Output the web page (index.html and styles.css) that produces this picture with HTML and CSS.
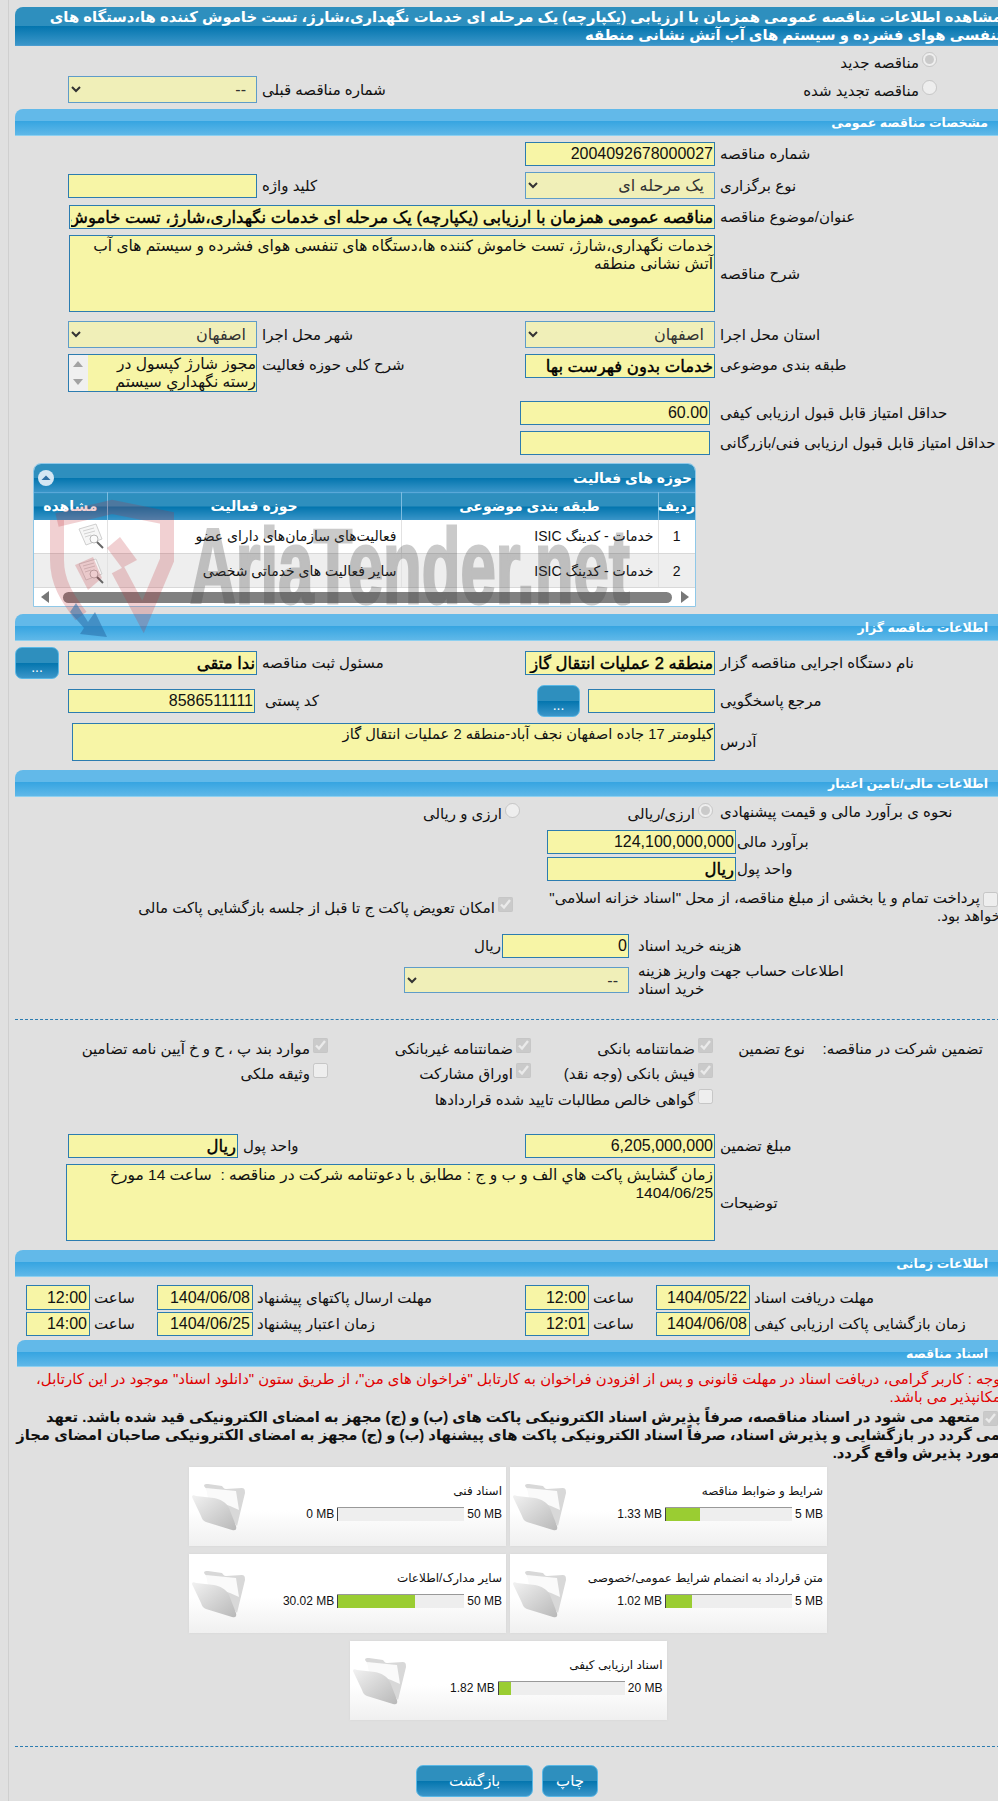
FILE: index.html
```html
<!DOCTYPE html>
<html lang="fa">
<head>
<meta charset="utf-8">
<title>مشاهده اطلاعات مناقصه</title>
<link rel="stylesheet" href="styles.css">
</head>
<body>
<main class="page">
<div class="content" dir="rtl">

<h1 class="title-bar">مشاهده اطلاعات مناقصه عمومی همزمان با ارزیابی (یکپارچه) یک مرحله ای خدمات نگهداری،شارژ، تست خاموش کننده ها،دستگاه های تنفسی هوای فشرده و سیستم های آب آتش نشانی منطقه</h1>

<div class="radio-line mt6 first-radio"><input type="radio" name="n" checked disabled class="radio"><span>مناقصه جدید</span></div>
<div class="row mt9 h27">
  <div class="radio-line renew"><input type="radio" name="n" disabled class="radio"><span>مناقصه تجدید شده</span></div>
  <div class="half span3"><label>شماره مناقصه قبلی</label><select disabled class="f189 h27"><option>--</option></select></div>
</div>

<h2 class="bar mt6">مشخصات مناقصه عمومی</h2>
<div class="row mt6 h24"><label>شماره مناقصه</label><input class="num" value="2004092678000027" readonly></div>
<div class="row mt6 h27"><label>نوع برگزاری</label><select disabled class="h27"><option>یک مرحله ای</option></select>
  <div class="half"><label>کلید واژه</label><input class="f189 h25" readonly></div></div>
<div class="row mt6 h24"><label>عنوان/موضوع مناقصه</label><input class="wide bold" readonly value="مناقصه عمومی همزمان با ارزیابی (یکپارچه) یک مرحله ای خدمات نگهداری،شارژ، تست خاموش کننده ها،دستگاه های تنفسی هوای فشرده و سیستم های آب آتش نشانی منطقه"></div>
<div class="row mt6 h77"><label>شرح مناقصه</label><textarea class="wide h77" readonly>خدمات نگهداری،شارژ، تست خاموش کننده ها،دستگاه های تنفسی هوای فشرده و سیستم های آب آتش نشانی منطقه</textarea></div>
<div class="row mt9 h27"><label>استان محل اجرا</label><select disabled class="h27"><option>اصفهان</option></select>
  <div class="half"><label>شهر محل اجرا</label><select disabled class="f189 h27"><option>اصفهان</option></select></div></div>
<div class="row mt6 h38 top"><label>طبقه بندی موضوعی</label><input class="bold h24" readonly value="خدمات بدون فهرست بها">
  <div class="half"><label>شرح کلی حوزه فعالیت</label><div class="scrollbox f189"><div class="scroll-rail"><i class="up"></i><i class="down"></i></div><p>مجوز شارژ کپسول در رسته نگهداري سيستم</p></div></div></div>
<div class="row-score mt9"><label>حداقل امتیاز قابل قبول ارزیابی کیفی</label><input class="num" value="60.00" readonly></div>
<div class="row-score mt6"><label>حداقل امتیاز قابل قبول ارزیابی فنی/بازرگانی</label><input readonly></div>

<section class="panel">
  <header class="panel-head"><span>حوزه های فعالیت</span><b class="collapse"><svg viewBox="0 0 16 16"><circle cx="8" cy="8" r="8" fill="#d4e6f3"/><path d="M3.5 10 8 5.5l4.500 4.500z" fill="#2f6fa3"/></svg></b></header>
  <table class="grid">
    <thead><tr><th class="c1">ردیف</th><th class="c2">طبقه بندی موضوعی</th><th class="c3">حوزه فعالیت</th><th class="c4">مشاهده</th></tr></thead>
    <tbody>
      <tr><td class="c1 ltr-num">1</td><td>خدمات - کدینگ ISIC</td><td>فعالیت‌های سازمان‌های دارای عضو</td><td class="c4"><svg class="doc" viewBox="0 0 30 28"><path d="M2 6 19 1l6 15-16 6z" fill="#f6f6f6" stroke="#cfcfcf"/><path d="M6 8l11-3M7 11l11-3M8 14l6-2" stroke="#d2d2d2"/><circle cx="17" cy="16" r="4" fill="#fbfbfb" stroke="#b8b8b8"/><path d="M20 19l6 6" stroke="#666" stroke-width="2"/></svg></td></tr>
      <tr class="alt"><td class="c1 ltr-num">2</td><td>خدمات - کدینگ ISIC</td><td>سایر فعالیت های خدماتی شخصی</td><td class="c4"><svg class="doc" viewBox="0 0 30 28"><path d="M2 6 19 1l6 15-16 6z" fill="#f6f6f6" stroke="#cfcfcf"/><path d="M6 8l11-3M7 11l11-3M8 14l6-2" stroke="#d2d2d2"/><circle cx="17" cy="16" r="4" fill="#fbfbfb" stroke="#b8b8b8"/><path d="M20 19l6 6" stroke="#666" stroke-width="2"/></svg></td></tr>
    </tbody>
  </table>
  <div class="hscroll"><i class="arrow-r"></i><div class="thumb"></div><i class="arrow-l"></i></div>
</section>

<h2 class="bar mt7">اطلاعات مناقصه گزار</h2>
<div class="row mt6 h32"><label>نام دستگاه اجرایی مناقصه گزار</label><input class="bold h24" readonly value="منطقه 2 عملیات انتقال گاز">
  <div class="half has-btn"><label>مسئول ثبت مناقصه</label><input class="f189 bold h24" readonly value="ندا متقی"><button class="btn" type="button">...</button></div></div>
<div class="row mt6 h32"><label>مرجع پاسخگویی</label><div class="pair"><input class="f127 h23" readonly><button class="btn btn-small" type="button">...</button></div>
  <div class="half code"><label>کد پستی</label><input class="f187 h24 num" readonly value="8586511111"></div></div>
<div class="row mt6 h38"><label>آدرس</label><textarea class="addr h38" readonly>کیلومتر 17 جاده اصفهان نجف آباد-منطقه 2 عملیات انتقال گاز</textarea></div>

<h2 class="bar mt9">اطلاعات مالی/تامین اعتبار</h2>
<div class="row-offer mt6"><label>نحوه ی برآورد مالی و قیمت پیشنهادی</label>
  <div class="offer-a"><input type="radio" name="o" checked disabled class="radio"><span>ارزی/ریالی</span></div>
  <div class="offer-b"><input type="radio" name="o" disabled class="radio"><span>ارزی و ریالی</span></div></div>
<div class="row-fin mt11"><label>برآورد مالی</label><input class="num" readonly value="124,100,000,000"></div>
<div class="row-fin mt3"><label>واحد پول</label><input class="bold" readonly value="ریال"></div>
<div class="row-treasury">
  <div class="check-text"><input type="checkbox" disabled class="check check-inline">پرداخت تمام و یا بخشی از مبلغ مناقصه، از محل "اسناد خزانه اسلامی" خواهد بود.</div>
  <div class="radio-line"><input type="checkbox" checked disabled class="check"><span>امکان تعویض پاکت ج تا قبل از جلسه بازگشایی پاکت مالی</span></div>
</div>
<div class="row-fee mt7"><label>هزینه خرید اسناد</label><input class="num" readonly value="0"><span class="unit">ریال</span></div>
<div class="row-account mt4"><label>اطلاعات حساب جهت واریز هزینه خرید اسناد</label><select disabled class="h26"><option>--</option></select></div>
<hr class="dash mt21">

<div class="row-guarantee mt18"><span class="g1">تضمین شرکت در مناقصه:</span><span class="g2">نوع تضمین</span>
  <div class="radio-line"><input type="checkbox" checked disabled class="check"><span>ضمانتنامه بانکی</span></div>
  <div class="radio-line"><input type="checkbox" checked disabled class="check"><span>ضمانتنامه غیربانکی</span></div>
  <div class="radio-line"><input type="checkbox" checked disabled class="check"><span>موارد بند پ ، ح و خ آیین نامه تضامین</span></div>
</div>
<div class="row-guarantee mt9"><span></span><span></span>
  <div class="radio-line"><input type="checkbox" checked disabled class="check"><span>فیش بانکی (وجه نقد)</span></div>
  <div class="radio-line"><input type="checkbox" checked disabled class="check"><span>اوراق مشارکت</span></div>
  <div class="radio-line"><input type="checkbox" disabled class="check"><span>وثیقه ملکی</span></div>
</div>
<div class="row-guarantee mt10"><span></span><span></span>
  <div class="radio-line nowrap"><input type="checkbox" disabled class="check"><span>گواهی خالص مطالبات تایید شده قراردادها</span></div>
</div>

<div class="row mt29 h24"><label>مبلغ تضمین</label><input class="num" readonly value="6,205,000,000">
  <div class="half"><label>واحد پول</label><input class="f170 bold h24" readonly value="ریال"></div></div>
<div class="row mt6 h77"><label>توضیحات</label><textarea class="notes-box h77" readonly>زمان گشايش پاكت هاي الف و ب و ج : مطابق با دعوتنامه شركت در مناقصه :  ساعت 14 مورخ 1404/06/25</textarea></div>

<h2 class="bar mt9">اطلاعات زمانی</h2>
<div class="row-time mt8 h25"><label>مهلت دریافت اسناد</label><input class="num" readonly value="1404/05/22"><label>ساعت</label><input class="num" readonly value="12:00"><label>مهلت ارسال پاکتهای پیشنهاد</label><input class="num" readonly value="1404/06/08"><label>ساعت</label><input class="num" readonly value="12:00"></div>
<div class="row-time mt2 h24"><label>زمان بازگشایی پاکت ارزیابی کیفی</label><input class="num" readonly value="1404/06/08"><label>ساعت</label><input class="num" readonly value="12:01"><label>زمان اعتبار پیشنهاد</label><input class="num" readonly value="1404/06/25"><label>ساعت</label><input class="num" readonly value="14:00"></div>

<h2 class="bar bar-docs mt4">اسناد مناقصه</h2>
<p class="warn">توجه : کاربر گرامی، دریافت اسناد در مهلت قانونی و پس از افزودن فراخوان به کارتابل "فراخوان های من"، از طریق ستون "دانلود اسناد" موجود در این کارتابل،<br>امکانپذیر می باشد.</p>
<p class="pledge"><input type="checkbox" checked disabled class="check check-inline">متعهد می شود در اسناد مناقصه، صرفاً پذیرش اسناد الکترونیکی پاکت های (ب) و (ج) مجهز به امضای الکترونیکی قید شده باشد. تعهد<br>می گردد در بازگشایی و پذیرش اسناد، صرفاً اسناد الکترونیکی پاکت های پیشنهاد (ب) و (ج) مجهز به امضای الکترونیکی صاحبان امضای مجاز<br>مورد پذیرش واقع گردد.</p>

<div class="cards">
  <article class="card"><div class="card-body"><h3>شرایط و ضوابط مناقصه</h3><div class="meter"><span>5 MB</span><div class="track"><div class="fill" style="width:35px"></div></div><span>1.33 MB</span></div></div><svg class="folder" viewBox="0 0 54 48"><use href="#folder"/></svg></article>
  <article class="card"><div class="card-body"><h3>اسناد فنی</h3><div class="meter"><span>50 MB</span><div class="track"><div class="fill" style="width:1px"></div></div><span>0 MB</span></div></div><svg class="folder" viewBox="0 0 54 48"><use href="#folder"/></svg></article>
  <article class="card"><div class="card-body"><h3>متن قرارداد به انضمام شرایط عمومی/خصوصی</h3><div class="meter"><span>5 MB</span><div class="track"><div class="fill" style="width:27px"></div></div><span>1.02 MB</span></div></div><svg class="folder" viewBox="0 0 54 48"><use href="#folder"/></svg></article>
  <article class="card"><div class="card-body"><h3>سایر مدارک/اطلاعات</h3><div class="meter"><span>50 MB</span><div class="track"><div class="fill" style="width:78px"></div></div><span>30.02 MB</span></div></div><svg class="folder" viewBox="0 0 54 48"><use href="#folder"/></svg></article>
  <article class="card"><div class="card-body"><h3>اسناد ارزیابی کیفی</h3><div class="meter"><span>20 MB</span><div class="track"><div class="fill" style="width:13px"></div></div><span>1.82 MB</span></div></div><svg class="folder" viewBox="0 0 54 48"><use href="#folder"/></svg></article>
</div>

<hr class="dash mt26">
<div class="actions"><button class="btn act-print" type="button">چاپ</button><button class="btn act-back" type="button">بازگشت</button></div>

</div>

<svg class="watermark" viewBox="0 0 700 660" aria-hidden="true">
  <g class="wm-red">
    <path d="M57 520 112 507l55 11v42L143 617 118 570" />
    <path d="M57 520v40c0 22 10 38 24 56" />
  </g>
  <polygon class="wm-fill" points="120,537 137,560 122,568 107,548"/>
  <polygon class="wm-fill" points="75,565 93,557 102,578 88,590"/>
  <path class="wm-arrow" d="M76 603 88 622 95 612 107 637 80 634 84 628 70 612z"/>
  <text class="wm-text" x="190" y="603" textLength="440" lengthAdjust="spacingAndGlyphs" dir="ltr">AriaTender.net</text>
</svg>
<svg class="defs" aria-hidden="true"><defs>
  <linearGradient id="fg" x1="0" y1="0" x2="1" y2="1"><stop offset="0" stop-color="#f2f2f2"/><stop offset="1" stop-color="#b8b8b8"/></linearGradient>
  <g id="folder">
    <path d="M12 2C12 0 14 0 16 0L30 2C31 3 32 5 34 5L50 4C53 4 53 7 53 9L45 42Z" fill="#d8d8d8"/>
    <path d="M14 4 44 7 47 26 38 22 16 14Z" fill="#fafafa"/>
    <path d="M0 13C0 11 2 11 4 12L22 14C28 15 34 18 37 24L44 42C45 46 43 47 40 46L14 38C11 37 10 35 9 32Z" fill="url(#fg)"/>
  </g>
</defs></svg>
</main>
</body>
</html>
```
FILE: styles.css
```css
* { box-sizing: border-box; }
html, body { margin: 0; padding: 0; width: 998px; height: 1801px; overflow: hidden; background: #e0e0e0; }
body { font-family: "Liberation Sans", "DejaVu Sans", sans-serif; font-size: 15px; line-height: 18px; color: #111; }
.page { position: relative; width: 998px; height: 1801px; margin: 0; padding: 0 0 0 8px; overflow: hidden; }
.page::before { content: ""; position: absolute; left: 8px; top: 0; bottom: 0; width: 1px; background: #cfcfcf; }
.content { width: 990px; margin-left: 7px; padding-top: 7px; }

.mt2 { margin-top: 2px; } .mt3 { margin-top: 3px; } .mt4 { margin-top: 4px; } .mt6 { margin-top: 6px; }
.mt7 { margin-top: 7px; } .mt8 { margin-top: 8px; } .mt9 { margin-top: 9px; } .mt10 { margin-top: 10px; }
.mt11 { margin-top: 11px; } .mt18 { margin-top: 18px; } .mt21 { margin-top: 21px; } .mt26 { margin-top: 26px; } .mt29 { margin-top: 29px; }
.h23 { height: 23px; } .h24 { height: 24px; } .h25 { height: 25px; } .h26 { height: 26px; } .h27 { height: 27px; }
.h32 { height: 32px; } .h38 { height: 38px; } .h77 { height: 77px; }

.title-bar { margin: 0; height: 39px; padding: 1px 3px 0 0; font-size: 14.800px; line-height: 18px; font-weight: bold; color: #fff;
  background: linear-gradient(#2e8fbe 0 49%, #0375ae 50%, #3b96c9 100%); border-radius: 8px 8px 0 0; border-bottom: 1px solid #4a9ccf; overflow: hidden; }
.bar { margin-bottom: 0; margin-left: 0; margin-right: 0; height: 27px; padding: 2px 17px 0 0; font-size: 12.500px; line-height: 24px; font-weight: bold; color: #fff;
  background: linear-gradient(#62b9e9 0 46%, #37a5e1 48%, #5fb8e8 100%); border-radius: 8px 8px 0 0; border-bottom: 1px solid #8dd0f0; }
.bar-docs { margin-left: 2px; }

label { display: block; text-align: left; }
input, select, textarea { font-family: inherit; font-size: 15.500px; line-height: 18px; color: #111; margin: 0; }
input:not([type]), textarea { background: #f7f5a6; border: 1px solid #2c7cb0; border-radius: 0; padding: 0 1px; outline: 0; width: 190px; }
input:not([type]) { height: 24px; }
textarea { resize: none; overflow: hidden; display: block; padding: 1px; }
select { width: 190px; height: 27px; background-color: #f7f5a6; border: 1px solid #2c7cb0; border-radius: 0; padding: 0 6px; font-size: 16px; }
select:disabled { opacity: 1; color: #333; background-color: #f0efb8; border-color: #5f9cc8; }
.bold { font-size: 16.500px; color: #000; -webkit-text-stroke: .4px #000; }
.num { font-size: 16px; }

.row { display: grid; grid-template-columns: 290px 190px 1fr; align-items: center; }
.row > label { padding-left: 5px; }
.row.top { align-items: start; }
.row.top > label { padding-top: 2px; }
.wide { width: 646px !important; grid-column: 2 / 4; }
.addr { width: 643px !important; grid-column: 2 / 4; font-size: 14.700px; }
.notes-box { width: 649px !important; grid-column: 2 / 4; }
.half { display: flex; justify-content: flex-end; align-items: center; gap: 5px; padding-left: 53px; }
.span3 { grid-column: 2 / 4; }
.half.has-btn { padding-left: 0; gap: 5px; }
.half.has-btn .btn { margin-right: 4px; }
.half.code { gap: 10px; padding-left: 53px; }
.half label { text-align: left; }
.top .half { align-items: flex-start; }
.top .half label { padding-top: 2px; }
.f189 { width: 189px !important; }
.f187 { width: 187px !important; }
.f170 { width: 170px !important; }
.f127 { width: 127px !important; }
.pair { display: flex; gap: 8px; align-items: center; }

.radio-line { display: flex; align-items: flex-start; gap: 3px; padding-right: 68px; }
.first-radio { height: 15px; }
.radio-line span { padding-top: 2px; }
.radio-line > input { flex: none; }
.renew { padding-right: 68px; grid-column: 1 / 2; align-self: center; white-space: nowrap; }
.radio { width: 15px; height: 15px; margin: 0; }
.check { width: 15px; height: 15px; margin: 0; }
.check-inline { vertical-align: middle; margin-left: 3px; }

.scrollbox { height: 38px; background: #f7f5a6; border: 1px solid #2c7cb0; display: flex; flex-direction: row-reverse; overflow: hidden; }
.scrollbox p { margin: 0; flex: 1; font-size: 15.500px; line-height: 18px; padding: 0; }
.scroll-rail { width: 19px; background: #f0f0f0; flex: none; position: relative; }
.up, .down { position: absolute; left: 4px; width: 0; height: 0; border-left: 5px solid transparent; border-right: 5px solid transparent; }
.up { top: 6px; border-bottom: 6px solid #a3a3a3; }
.down { bottom: 6px; border-top: 6px solid #a3a3a3; }

.row-score { display: grid; grid-template-columns: 295px 190px; align-items: center; height: 24px; }
.row-score label { padding-left: 10px; white-space: nowrap; }

.panel { margin: 8px 309px 0 0; width: 663px; height: 144px; border: 1px solid #8fc8e8; border-radius: 8px 8px 0 0; background: #fff; overflow: hidden; }
.panel-head { height: 28px; display: flex; justify-content: space-between; align-items: center; padding: 0 3px 0 4px; color: #fff; font-weight: bold; font-size: 14px;
  background: linear-gradient(#2e8fbe 0 49%, #0375ae 50%, #3b96c9 100%); }
.collapse { width: 16px; height: 16px; display: block; }
.collapse svg { display: block; width: 16px; height: 16px; }
.grid { width: 661px; border-collapse: collapse; table-layout: fixed; }
.grid th { height: 27px; padding: 0; color: #fff; font-size: 14px; font-weight: bold; text-align: center; border-left: 1px solid #7cbce0; border-top: 1px solid #5aa8d8;
  background: linear-gradient(#2e8fbe 0 49%, #0375ae 50%, #3b96c9 100%); }
.grid th:last-child { border-left: 0; }
.grid td { height: 34px; padding: 0 4px; border-left: 1px solid #e2e2e2; border-bottom: 1px solid #d8d8d8; text-align: right; font-size: 14px; white-space: nowrap; overflow: hidden; }
.grid td:last-child { border-left: 0; }
.grid .alt td { background: #eeeeee; }
.c1 { width: 37px; } .c2 { width: 257px; } .c3 { width: 294px; } .c4 { width: 73px; }
.grid td.ltr-num { text-align: center; }
.grid td.c4 { padding: 0; text-align: left; }
.doc { display: block; width: 30px; height: 28px; margin: 2px 0 0 44px; }
.hscroll { position: relative; height: 19px; background: #fff; }
.thumb { position: absolute; left: 29px; right: 23px; top: 4px; height: 11px; border-radius: 6px; background: #808080; }
.arrow-l, .arrow-r { position: absolute; top: 3px; width: 0; height: 0; border-top: 6px solid transparent; border-bottom: 6px solid transparent; }
.arrow-l { left: 7px; border-right: 8px solid #777; }
.arrow-r { right: 6px; border-left: 8px solid #777; }

.btn { display: block; border: 1px solid #5ab8e6; border-radius: 7px; color: #fff; font-family: inherit; font-size: 14px; padding: 8px 0 0; cursor: pointer;
  background: linear-gradient(#2e8fbe 0 49%, #0375ae 50%, #3b96c9 100%); width: 44px; height: 32px; flex: none; }
.btn-small { width: 43px; }

.row-offer { display: flex; height: 16px; align-items: flex-start; }
.row-offer label { width: 285px; }
.offer-a, .offer-b { display: flex; gap: 3px; }
.offer-a span, .offer-b span { padding-top: 2px; }
.offer-a { width: 200px; padding-right: 7px; }
.row-fin { display: grid; grid-template-columns: 269px 189px; height: 24px; align-items: center; }
.row-fin input { width: 189px; }
.row-fin label { padding-left: 1px; }
.row-treasury { display: grid; grid-template-columns: 465px 1fr; margin-top: 6px; height: 40px; align-items: center; }
.check-text { margin-right: 4px; }
.check-text .check-inline { margin-right: 3px; }
.row-treasury .radio-line { padding-right: 27px; white-space: nowrap; }
.row-fee { display: grid; grid-template-columns: 376px 127px auto; height: 24px; align-items: center; justify-content: start; }
.row-fee input { width: 127px; }
.row-fee label { padding-left: 9px; }
.unit { padding-right: 1px; }
.row-account { display: grid; grid-template-columns: 376px 225px; height: 36px; align-items: center; }
.row-account select { width: 225px; }
.row-account label { padding-left: 9px; padding-right: 150px; }

.dash { border: 0; border-top: 1px dashed #2c7cb0; height: 0; margin-bottom: 0; margin-left: 0; margin-right: 0; }
.row-guarantee { display: grid; grid-template-columns: 180px 112px 182px 203px 1fr; height: 16px; align-items: flex-start; }
.row-guarantee .g1 { padding-right: 22px; padding-top: 2px; white-space: nowrap; }
.row-guarantee .g2 { padding-right: 20px; padding-top: 2px; white-space: nowrap; }
.row-guarantee .radio-line { padding-right: 0; white-space: nowrap; }
.row-guarantee .nowrap { grid-column: 3 / 5; }

.row-time { display: grid; grid-template-columns: 255px 94px 67px 64px 272px 96px 67px 64px; align-items: center; }
.row-time input { width: 100%; padding: 0 2px; height: 100%; }
.row-time label { padding-left: 4px; white-space: nowrap; }

.warn { margin: 3px 0 0; color: #e00000; font-size: 14.900px; line-height: 18px; white-space: nowrap; }
.pledge { margin: 2px 0 0; font-weight: bold; font-size: 14.800px; line-height: 18px; padding-right: 5px; white-space: nowrap; }
.pledge .check-inline { margin-right: 2px; }

.cards { display: flex; flex-wrap: wrap; justify-content: center; gap: 8px 4px; width: 640px; margin: 5px auto 0; position: relative; left: -2px; }
.card { width: 317px; height: 79px; display: flex; justify-content: space-between; background: linear-gradient(#fff 0 55%, #f0f0f0 100%); box-shadow: 0 0 2px #d4d4d4; padding: 0 3px; }
.card h3 { margin: 15px 0 0; font-size: 12px; font-weight: normal; line-height: 18px; color: #111; }
.meter { margin-top: 7px; display: flex; align-items: center; gap: 3px; font-size: 12px; line-height: 14px; height: 14px; }
.meter span { direction: ltr; unicode-bidi: isolate; }
.track { width: 127px; height: 14px; background: #eee; border-top: 1px solid #999; display: flex; justify-content: flex-end; }
.fill { background: #9acd32; border-left: 1px solid #444; height: 13px; }
.card-body { padding-right: 1px; }
.folder { display: block; width: 54px; height: 48px; margin-top: 17px; }

.actions { display: flex; justify-content: center; gap: 9px; margin-top: 18px; position: relative; left: -3px; }
.actions .btn { height: 32px; font-size: 15px; padding: 0; }
.act-print { width: 56px; }
.act-back { width: 117px; }

.watermark { position: absolute; left: 0; top: 0; width: 700px; height: 660px; pointer-events: none; }
.wm-red path { fill: none; stroke: #c02a32; stroke-width: 14; opacity: .22; }
.wm-fill { fill: #c02a32; opacity: .22; }
.wm-arrow { fill: #2a6ea8; opacity: .55; }
.wm-text { font-family: "Liberation Sans", sans-serif; font-weight: bold; font-size: 105px; fill: #444; stroke: #444; stroke-width: 3px; opacity: .28; }
.defs { position: absolute; width: 0; height: 0; }
```
